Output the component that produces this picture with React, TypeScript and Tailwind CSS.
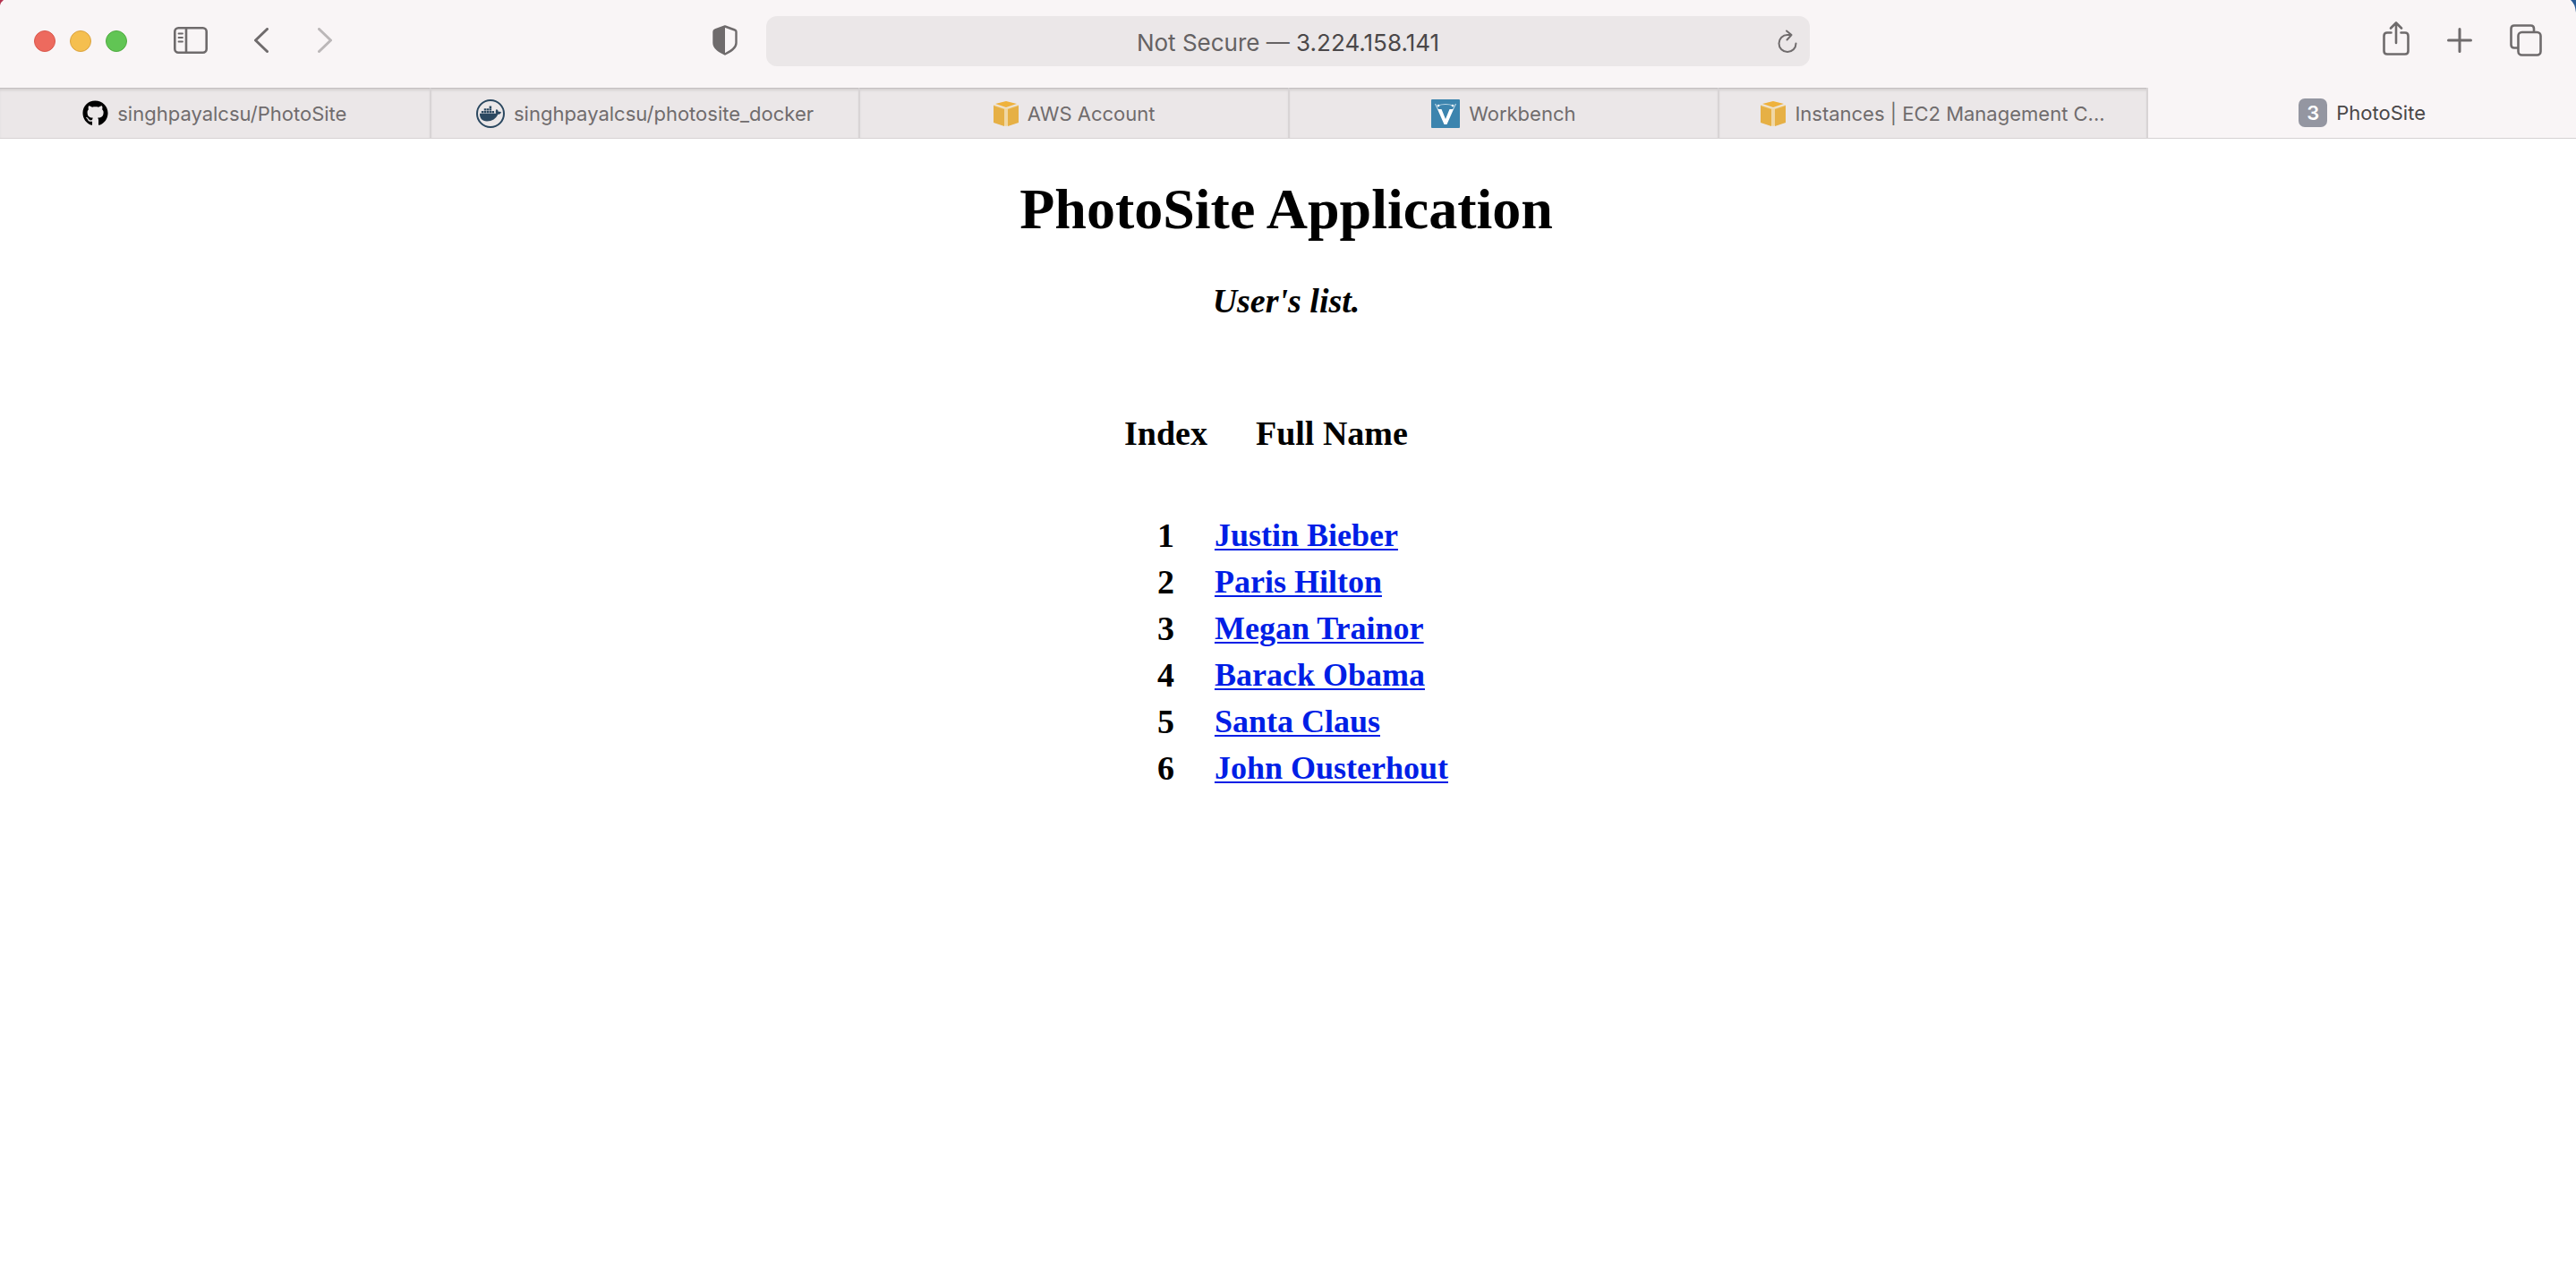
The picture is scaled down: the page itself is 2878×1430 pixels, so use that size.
import React from "react";
import { FaGithub, FaDocker } from "react-icons/fa";

const users = ["Justin Bieber", "Paris Hilton", "Megan Trainor", "Barack Obama", "Santa Claus", "John Ousterhout"];

function GithubIcon() {
  return <FaGithub className="size-[29px] shrink-0 text-black" />;
}

function DockerIcon() {
  return (
    <span className="flex size-8 shrink-0 items-center justify-center rounded-full border-2 border-[#2b4860] text-[#2b4860]">
      <FaDocker className="size-6" />
    </span>
  );
}

function AwsIcon() {
  return (
    <svg className="h-[30px] w-7 shrink-0" viewBox="0 0 28 30" aria-hidden="true">
      <path d="M0 5 14 9 28 5V24.500L14 29 0 24.500Z" fill="#f0d7a4" />
      <path d="M14 1 26 4 14 8 2 4Z" fill="#efb23c" />
      <path d="M0 6 12 10V29L0 25Z" fill="#e6b045" />
      <path d="M28 6 16 10V29L28 25Z" fill="#e6b045" />
    </svg>
  );
}

function WorkbenchIcon() {
  return (
    <svg className="size-8 shrink-0" viewBox="0 0 32 32" aria-hidden="true">
      <rect width="32" height="32" rx="1" fill="#3c84ae" />
      <path d="M7 11h4.500L16 22l4.500-11H25L17.500 28h-3Z" fill="#fff" />
      <path d="M4.500 5l3 6M27.500 5l-3 6M7 7q9-3 18 0" fill="none" stroke="#b9d6e5" strokeWidth="1.200" />
      <circle cx="8" cy="7" r="1.300" fill="#fff" />
      <circle cx="24" cy="7" r="1.300" fill="#fff" />
    </svg>
  );
}

function NumberIcon() {
  return (
    <span className="flex size-8 shrink-0 items-center justify-center rounded-[7px] bg-[#9496a1] text-[22px] font-semibold text-white">
      3
    </span>
  );
}

const tabs = [
  { title: "singhpayalcsu/PhotoSite", icon: <GithubIcon /> },
  { title: "singhpayalcsu/photosite_docker", icon: <DockerIcon /> },
  { title: "AWS Account", icon: <AwsIcon /> },
  { title: "Workbench", icon: <WorkbenchIcon /> },
  { title: "Instances | EC2 Management C...", icon: <AwsIcon /> },
  { title: "PhotoSite", icon: <NumberIcon />, active: true },
];

function Toolbar() {
  return (
    <div className="grid h-[98px] grid-cols-[1fr_1166px_1fr] pb-2 text-[#6f6b6c]">
      <div className="flex items-center pl-[38px]">
        <div className="mt-0.5 flex gap-4">
          <button aria-label="Close" className="size-6 rounded-full border border-[#d9574c] bg-[#ed6a5e]" />
          <button aria-label="Minimize" className="size-6 rounded-full border border-[#dba340] bg-[#f5bf4f]" />
          <button aria-label="Zoom" className="size-6 rounded-full border border-[#50ab41] bg-[#61c554]" />
        </div>
        <button aria-label="Show sidebar" className="ml-[52px]">
          <svg className="h-[30px] w-[38px]" viewBox="0 0 38 30" fill="none" stroke="currentColor">
            <rect x="1.300" y="1.300" width="35.400" height="27.400" rx="4" strokeWidth="2.600" />
            <path d="M14 1v28" strokeWidth="2.600" />
            <path d="M5.500 7.500h4.500M5.500 12h4.500M5.500 16.500h4.500" strokeWidth="1.800" strokeLinecap="round" />
          </svg>
        </button>
        <button aria-label="Back" className="ml-[52px]">
          <svg className="h-7 w-4" viewBox="0 0 16 28" fill="none" stroke="currentColor" strokeWidth="3" strokeLinecap="round" strokeLinejoin="round">
            <path d="M14.500 1.500 1.500 14l13 12.500" />
          </svg>
        </button>
        <button aria-label="Forward" className="ml-[55px] text-[#bbb7b8]" disabled>
          <svg className="h-7 w-4" viewBox="0 0 16 28" fill="none" stroke="currentColor" strokeWidth="3" strokeLinecap="round" strokeLinejoin="round">
            <path d="M1.500 1.500 14.500 14l-13 12.500" />
          </svg>
        </button>
      </div>

      <div className="flex items-center">
        <button aria-label="Privacy report" className="-ml-[60px] mr-8">
          <svg className="h-[34px] w-7" viewBox="0 0 28 34" fill="none">
            <path d="M14 1.500 25 5.500q1.500.5 1.500 2V20c0 6-6.500 9.500-12.500 12.500C8 29.500 1.500 26 1.500 20V7.500q0-1.500 1.500-2Z" stroke="currentColor" strokeWidth="2.400" strokeLinejoin="round" />
            <path d="M14 1.500 3 5.500q-1.500.5-1.500 2V20c0 6 6.500 9.500 12.500 12.500Z" fill="currentColor" />
          </svg>
        </button>
        <div className="mt-0.5 flex h-14 flex-1 items-center rounded-xl bg-[#ebe7e8] pl-9 pr-3.5">
          <button className="mt-1 flex-1 text-center text-[26px] leading-8 text-[#656263]">
            Not Secure — <span className="text-[#4a4748]">3.224.158.141</span>
          </button>
          <button aria-label="Reload">
            <svg className="h-[27px] w-[22px]" viewBox="0 0 22 27" fill="none" stroke="currentColor" strokeWidth="2" strokeLinecap="round" strokeLinejoin="round">
              <path d="M20.500 15.500a9.500 9.500 0 1 1-9.500-9.500h4.500M10 1.500l5.500 4.500-5 5.500" />
            </svg>
          </button>
        </div>
      </div>

      <div className="flex items-center justify-end pr-[38px]">
        <button aria-label="Share" className="-mt-1">
          <svg className="h-[38px] w-[30px]" viewBox="0 0 30 38" fill="none" stroke="currentColor" strokeWidth="2.600" strokeLinecap="round" strokeLinejoin="round">
            <path d="M9.500 12.500H5q-3.500 0-3.500 3.500V33q0 3.500 3.500 3.500H25q3.500 0 3.500-3.500V16q0-3.500-3.500-3.500H20.500M15 24V2M9 7.500l6-6 6 6" />
          </svg>
        </button>
        <button aria-label="New tab" className="ml-[42px]">
          <svg className="size-7" viewBox="0 0 28 28" fill="none" stroke="currentColor" strokeWidth="3" strokeLinecap="round">
            <path d="M14 1.500v25M1.500 14h25" />
          </svg>
        </button>
        <button aria-label="Show all tabs" className="ml-[42px]">
          <svg className="size-9" viewBox="0 0 36 36" fill="none" stroke="currentColor" strokeWidth="2.600">
            <rect x="9.500" y="9" width="25" height="25.500" rx="4" />
            <path d="M27 9V5q0-3.500-3.500-3.500H5Q1.500 1.500 1.500 5V23q0 3.500 3.500 3.500h4.500" />
          </svg>
        </button>
      </div>
    </div>
  );
}

function TabBar() {
  return (
    <div className="grid h-[57px] grid-cols-6 border-b border-[#d6d2d3] text-[22px] leading-7" role="tablist">
      {tabs.map((tab) => (
        <button
          key={tab.title}
          role="tab"
          aria-selected={Boolean(tab.active)}
          className={
            tab.active
              ? "flex items-center justify-center gap-2.5 border-l-2 border-[#d8d4d5] text-[#4a4748]"
              : "flex items-center justify-center gap-2.5 border-l-2 border-t border-l-[#d8d4d5] border-t-[#c3bfc0] bg-[#ebe7e8] text-[#706c6d] shadow-[inset_0_3px_3px_-1px_#d3cfd0] first:border-l-0"
          }
        >
          {tab.icon}
          <span className="whitespace-nowrap">{tab.title}</span>
        </button>
      ))}
    </div>
  );
}

export default function App() {
  return (
    <div className="min-h-screen bg-white">
      <header className="relative bg-[#f9f5f6] font-['Inter',sans-serif]">
        <Toolbar />
        <TabBar />
        <svg className="absolute left-0 top-0 h-1.5 w-1" viewBox="0 0 4 6" aria-hidden="true">
          <path d="M0 0h4Q1 2 0 6Z" fill="#b5324f" />
        </svg>
        <svg className="absolute right-0 top-0 h-3.5 w-1.5" viewBox="0 0 6 14" aria-hidden="true">
          <path d="M0 0h6v14Q5 4 0 0Z" fill="#2a5c96" />
        </svg>
      </header>

      <main className="flex flex-col items-center pr-1 font-['Liberation_Serif',serif] font-bold text-black">
        <h1 className="mt-[42px] text-[64px] leading-[74px]">PhotoSite Application</h1>
        <h2 className="mt-11 text-[38px] italic leading-[42px]">User's list.</h2>
        <table className="mt-[97px] border-separate border-spacing-1 text-[38px] leading-[44px]">
          <thead>
            <tr>
              <th className="px-0.5 py-1 text-center">Index</th>
              <th className="pl-12 text-left">Full Name</th>
            </tr>
          </thead>
          <tbody>
            <tr className="h-14" aria-hidden="true"><td colSpan={2} /></tr>
            {users.map((name, i) => (
              <tr key={name}>
                <td className="p-0.5 text-center">{i + 1}</td>
                <td className="p-0.5 text-[36px]">
                  <a href={"#user-" + (i + 1)} className="text-[#001ee6] underline decoration-2 underline-offset-[3px]">{name}</a>
                </td>
              </tr>
            ))}
          </tbody>
        </table>
      </main>
    </div>
  );
}
